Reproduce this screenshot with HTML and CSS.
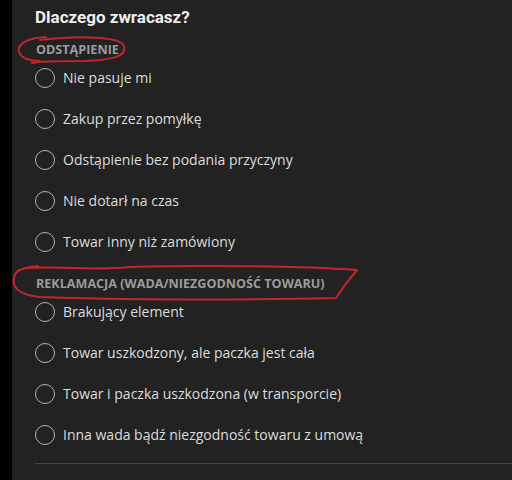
FILE: index.html
```html
<!DOCTYPE html>
<html lang="pl">
<head>
<meta charset="utf-8">
<title>Dlaczego zwracasz?</title>
<link rel="stylesheet" href="styles.css">
</head>
<body>
<div class="panel">
  <h2 class="title">Dlaczego zwracasz?</h2>
  <section class="group">
    <div class="group-label">ODSTĄPIENIE</div>
    <label class="option"><span class="radio"></span><span class="text">Nie pasuje mi</span></label>
    <label class="option"><span class="radio"></span><span class="text">Zakup przez pomyłkę</span></label>
    <label class="option"><span class="radio"></span><span class="text">Odstąpienie bez podania przyczyny</span></label>
    <label class="option"><span class="radio"></span><span class="text">Nie dotarł na czas</span></label>
    <label class="option"><span class="radio"></span><span class="text">Towar inny niż zamówiony</span></label>
  </section>
  <section class="group">
    <div class="group-label">REKLAMACJA (WADA/NIEZGODNOŚĆ TOWARU)</div>
    <label class="option"><span class="radio"></span><span class="text">Brakujący element</span></label>
    <label class="option"><span class="radio"></span><span class="text">Towar uszkodzony, ale paczka jest cała</span></label>
    <label class="option"><span class="radio"></span><span class="text">Towar i paczka uszkodzona (w transporcie)</span></label>
    <label class="option"><span class="radio"></span><span class="text">Inna wada bądź niezgodność towaru z umową</span></label>
  </section>
  <hr class="divider">
</div>
<svg class="marks" width="512" height="480" viewBox="0 0 512 480" fill="none" stroke="#c3262a" stroke-width="2" stroke-linecap="round" stroke-linejoin="round">
  <path d="M40 40 C 82 35, 121 37, 124 46 C 127 56, 114 60, 84 61 C 58 61, 42 61, 32 63"/>
  <path d="M46 37 C 26 38, 15 45, 20 54 C 23 59, 30 61, 40 61"/>
  <path d="M28 268 C 60 266, 95 271, 130 267 C 200 265, 300 266, 357 270 C 350 278, 341 290, 336 298 C 250 300, 120 300, 40 297 C 20 295, 12 288, 14 278 C 15 270, 22 268, 38 266"/>
</svg>
</body>
</html>
```
FILE: styles.css
```css
html, body {
  margin: 0;
  padding: 0;
  background: #000;
  height: 480px;
  overflow: hidden;
}

body {
  position: relative;
}

.panel {
  margin-left: 12px;
  background: #222222;
  min-height: 480px;
  padding-left: 23px;
  box-sizing: border-box;
}

.title {
  margin: 0;
  padding-top: 7px;
  font-family: Roboto, "Liberation Sans", sans-serif;
  font-weight: 700;
  font-size: 17px;
  line-height: 20px;
  color: #eeeeee;
}

.group {
  padding-top: 16px;
}

.group + .group {
  padding-top: 15px;
}

.group-label {
  font-family: "Open Sans", "Liberation Sans", sans-serif;
  font-weight: 700;
  font-size: 12.6px;
  line-height: 14px;
  color: #9c9c9c;
  padding-left: 1px;
}

.option {
  display: flex;
  align-items: center;
  gap: 8px;
  height: 41px;
  font-family: "Open Sans", "Liberation Sans", sans-serif;
  font-size: 14px;
  color: #dddddd;
}

.radio {
  width: 20px;
  height: 20px;
  border: 1.5px solid #b4b4b4;
  border-radius: 50%;
  box-sizing: border-box;
  flex: none;
}

.divider {
  margin: 8px 0 0 0;
  border: 0;
  border-top: 1px solid #444444;
}

.marks {
  position: absolute;
  top: 0;
  left: 0;
  pointer-events: none;
}
```
